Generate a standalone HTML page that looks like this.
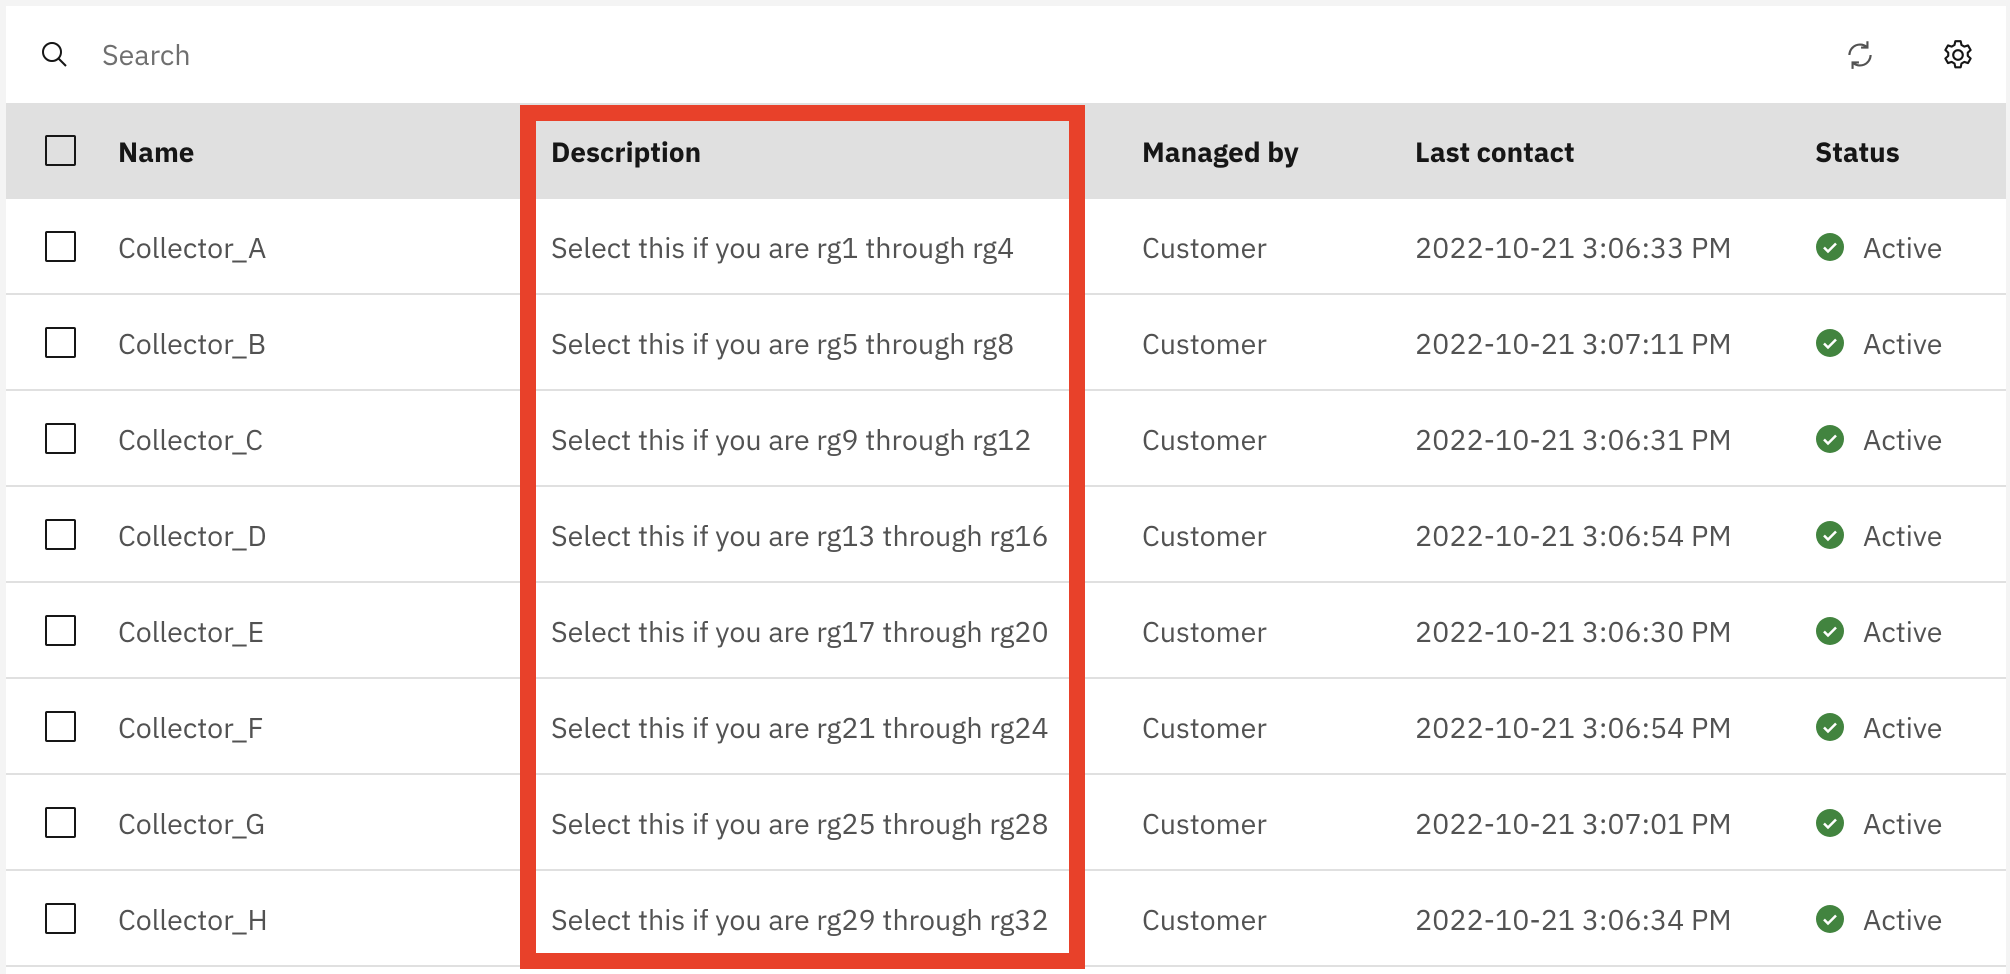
<!DOCTYPE html>
<html><head><meta charset="utf-8"><style>
*{margin:0;padding:0;box-sizing:border-box}
body{width:2010px;height:974px;background:#f4f4f4;position:relative;overflow:hidden;font-family:"IBM Plex Sans","Liberation Sans",sans-serif}
.panel{position:absolute;left:6px;top:6px;width:2000px;height:968px;background:#fff}
.hdr{position:absolute;left:6px;top:103px;width:2000px;height:96px;background:#e0e0e0}
.row{position:absolute;left:6px;width:2000px;height:96px;border-bottom:2px solid #e0e0e0}
.t{position:absolute;font-size:28.6px;color:#525252;white-space:nowrap;line-height:32px}
.h{position:absolute;font-size:27.8px;color:#161616;font-weight:bold;white-space:nowrap;line-height:32px}
.cb{position:absolute;left:39px;width:31px;height:31px;border:2px solid #161616;border-radius:2px}
.red{position:absolute;left:520px;top:105px;width:565px;height:864px;border:16px solid #e8412a}
.ok{position:absolute;width:28px;height:28px}
</style></head><body>
<div class="panel"></div>
<svg style="position:absolute;left:40px;top:40px" width="30" height="30" viewBox="0 0 30 30"><circle cx="12" cy="12" r="9" fill="none" stroke="#161616" stroke-width="2"/><line x1="18.5" y1="18.5" x2="26" y2="26" stroke="#161616" stroke-width="2"/></svg>
<div class="t" style="left:102px;top:39px;color:#6f6f6f">Search</div>
<svg style="position:absolute;left:1843px;top:38px" width="34" height="34" viewBox="0 0 32 32"><path d="M6 16a10 10 0 0 1 17-7M26 16a10 10 0 0 1-17 7" fill="none" stroke="#525252" stroke-width="2"/><path d="M23 3v6h-6M9 29v-6h6" fill="none" stroke="#525252" stroke-width="2"/></svg>
<div style="position:absolute"></div>
<svg style="position:absolute;left:1941px;top:38px" width="34" height="34" viewBox="0 0 32 32"><path d="M13.5 3h5l.8 3.6 2.6 1.5 3.5-1.1 2.5 4.3-2.7 2.5v3l2.7 2.5-2.5 4.3-3.5-1.1-2.6 1.5-.8 3.6h-5l-.8-3.6-2.6-1.5-3.5 1.1-2.5-4.3 2.7-2.5v-3L4.1 11.3l2.5-4.3 3.5 1.1 2.6-1.5z" fill="none" stroke="#161616" stroke-width="2" stroke-linejoin="round"/><circle cx="16" cy="16" r="4.5" fill="none" stroke="#161616" stroke-width="2"/></svg>
<div class="hdr">
<div class="cb" style="top:32px"></div>
<div class="h" style="left:112px;top:33px">Name</div>
<div class="h" style="left:545px;top:33px">Description</div>
<div class="h" style="left:1136px;top:33px">Managed by</div>
<div class="h" style="left:1409px;top:33px">Last contact</div>
<div class="h" style="left:1809px;top:33px">Status</div>
</div>
<div class="row" style="top:199px"><div class="cb" style="top:32px"></div><div class="t" style="left:112px;top:33px">Collector_A</div><div class="t" style="left:545px;top:33px">Select this if you are rg1 through rg4</div><div class="t" style="left:1136px;top:33px">Customer</div><div class="t" style="left:1409px;top:33px">2022-10-21 3:06:33 PM</div><svg class="ok" style="left:1810px;top:34px" viewBox="0 0 28 28"><circle cx="14" cy="14" r="14" fill="#42843f"/><path d="M8 14.5l4 4 8-8" fill="none" stroke="#fff" stroke-width="2.5"/></svg><div class="t" style="left:1857px;top:33px">Active</div></div>
<div class="row" style="top:295px"><div class="cb" style="top:32px"></div><div class="t" style="left:112px;top:33px">Collector_B</div><div class="t" style="left:545px;top:33px">Select this if you are rg5 through rg8</div><div class="t" style="left:1136px;top:33px">Customer</div><div class="t" style="left:1409px;top:33px">2022-10-21 3:07:11 PM</div><svg class="ok" style="left:1810px;top:34px" viewBox="0 0 28 28"><circle cx="14" cy="14" r="14" fill="#42843f"/><path d="M8 14.5l4 4 8-8" fill="none" stroke="#fff" stroke-width="2.5"/></svg><div class="t" style="left:1857px;top:33px">Active</div></div>
<div class="row" style="top:391px"><div class="cb" style="top:32px"></div><div class="t" style="left:112px;top:33px">Collector_C</div><div class="t" style="left:545px;top:33px">Select this if you are rg9 through rg12</div><div class="t" style="left:1136px;top:33px">Customer</div><div class="t" style="left:1409px;top:33px">2022-10-21 3:06:31 PM</div><svg class="ok" style="left:1810px;top:34px" viewBox="0 0 28 28"><circle cx="14" cy="14" r="14" fill="#42843f"/><path d="M8 14.5l4 4 8-8" fill="none" stroke="#fff" stroke-width="2.5"/></svg><div class="t" style="left:1857px;top:33px">Active</div></div>
<div class="row" style="top:487px"><div class="cb" style="top:32px"></div><div class="t" style="left:112px;top:33px">Collector_D</div><div class="t" style="left:545px;top:33px">Select this if you are rg13 through rg16</div><div class="t" style="left:1136px;top:33px">Customer</div><div class="t" style="left:1409px;top:33px">2022-10-21 3:06:54 PM</div><svg class="ok" style="left:1810px;top:34px" viewBox="0 0 28 28"><circle cx="14" cy="14" r="14" fill="#42843f"/><path d="M8 14.5l4 4 8-8" fill="none" stroke="#fff" stroke-width="2.5"/></svg><div class="t" style="left:1857px;top:33px">Active</div></div>
<div class="row" style="top:583px"><div class="cb" style="top:32px"></div><div class="t" style="left:112px;top:33px">Collector_E</div><div class="t" style="left:545px;top:33px">Select this if you are rg17 through rg20</div><div class="t" style="left:1136px;top:33px">Customer</div><div class="t" style="left:1409px;top:33px">2022-10-21 3:06:30 PM</div><svg class="ok" style="left:1810px;top:34px" viewBox="0 0 28 28"><circle cx="14" cy="14" r="14" fill="#42843f"/><path d="M8 14.5l4 4 8-8" fill="none" stroke="#fff" stroke-width="2.5"/></svg><div class="t" style="left:1857px;top:33px">Active</div></div>
<div class="row" style="top:679px"><div class="cb" style="top:32px"></div><div class="t" style="left:112px;top:33px">Collector_F</div><div class="t" style="left:545px;top:33px">Select this if you are rg21 through rg24</div><div class="t" style="left:1136px;top:33px">Customer</div><div class="t" style="left:1409px;top:33px">2022-10-21 3:06:54 PM</div><svg class="ok" style="left:1810px;top:34px" viewBox="0 0 28 28"><circle cx="14" cy="14" r="14" fill="#42843f"/><path d="M8 14.5l4 4 8-8" fill="none" stroke="#fff" stroke-width="2.5"/></svg><div class="t" style="left:1857px;top:33px">Active</div></div>
<div class="row" style="top:775px"><div class="cb" style="top:32px"></div><div class="t" style="left:112px;top:33px">Collector_G</div><div class="t" style="left:545px;top:33px">Select this if you are rg25 through rg28</div><div class="t" style="left:1136px;top:33px">Customer</div><div class="t" style="left:1409px;top:33px">2022-10-21 3:07:01 PM</div><svg class="ok" style="left:1810px;top:34px" viewBox="0 0 28 28"><circle cx="14" cy="14" r="14" fill="#42843f"/><path d="M8 14.5l4 4 8-8" fill="none" stroke="#fff" stroke-width="2.5"/></svg><div class="t" style="left:1857px;top:33px">Active</div></div>
<div class="row" style="top:871px"><div class="cb" style="top:32px"></div><div class="t" style="left:112px;top:33px">Collector_H</div><div class="t" style="left:545px;top:33px">Select this if you are rg29 through rg32</div><div class="t" style="left:1136px;top:33px">Customer</div><div class="t" style="left:1409px;top:33px">2022-10-21 3:06:34 PM</div><svg class="ok" style="left:1810px;top:34px" viewBox="0 0 28 28"><circle cx="14" cy="14" r="14" fill="#42843f"/><path d="M8 14.5l4 4 8-8" fill="none" stroke="#fff" stroke-width="2.5"/></svg><div class="t" style="left:1857px;top:33px">Active</div></div>
<div class="red"></div>
</body></html>
